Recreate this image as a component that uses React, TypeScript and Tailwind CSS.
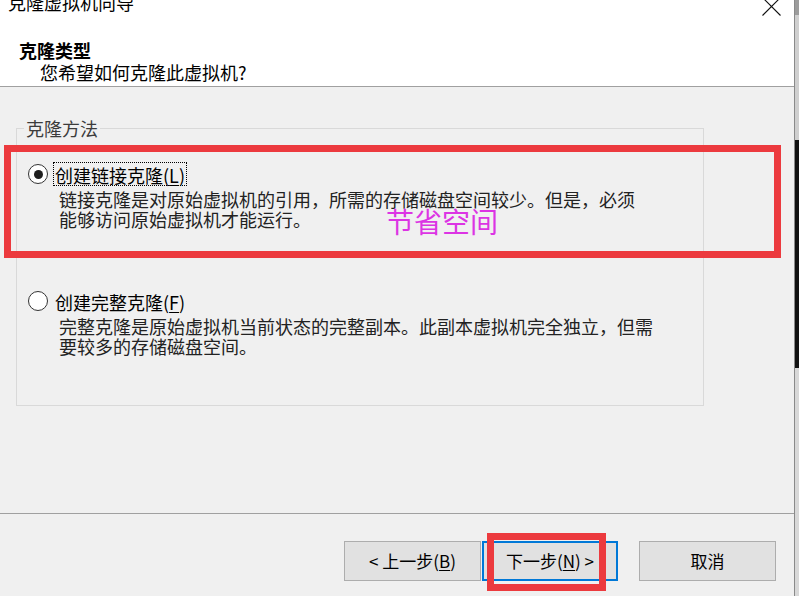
import React from "react";

function Radio({ checked }: { checked?: boolean }) {
  return (
    <span className="flex h-[20px] w-[20px] shrink-0 items-center justify-center rounded-full border-[1.5px] border-[#333] bg-white">
      {checked && <span className="h-[9px] w-[9px] rounded-full bg-[#1e1e1e]" />}
    </span>
  );
}

function Header() {
  return (
    <div className="relative flex h-[87px] shrink-0 flex-col border-b border-[#a0a0a0] bg-white">
      <div className="-mt-[7px] pl-[8px] text-[18px] leading-[18px]">克隆虚拟机向导</div>
      <div className="mt-[30px] pl-[19px] text-[18px] font-bold leading-[18px]">克隆类型</div>
      <div className="mt-[4px] pl-[40px] text-[18px] leading-[18px]">您希望如何克隆此虚拟机?</div>
      {/* close button glyph */}
      <svg className="absolute left-[762px] top-[-3px]" width="19" height="19" viewBox="0 0 19 19">
        <path d="M0.5 0.5 L18.5 18.5 M18.5 0.5 L0.5 18.5" stroke="#111" strokeWidth="1.1" fill="none" />
      </svg>
    </div>
  );
}

function Option({
  label,
  mnemonic,
  lines,
  checked,
  focused,
  top,
}: {
  label: string;
  mnemonic: string;
  lines: string[];
  checked?: boolean;
  focused?: boolean;
  top: string;
}) {
  return (
    <div className={top}>
      <div className="ml-[11px] flex items-center">
        <Radio checked={checked} />
        <span
          className={
            "ml-[5px] border border-dotted px-[1px] pt-[2px] text-[18px] leading-[20px] " +
            (focused ? "border-black" : "border-transparent")
          }
        >
          {label}(<span className="underline underline-offset-2">{mnemonic}</span>)
        </span>
      </div>
      <div className="ml-[42px] mt-[3px] text-[18px] leading-[20px] text-[#222]">
        {lines.map((l) => (
          <div key={l}>{l}</div>
        ))}
      </div>
    </div>
  );
}

function Body() {
  return (
    <div className="flex h-[426px] shrink-0 flex-col pl-[16px] pt-[32px]">
      <fieldset className="h-[287px] w-[688px] border border-[#d9d9d9]">
        <legend className="ml-[7px] px-[2px] text-[18px] leading-[18px] text-[#3c3c3c]">克隆方法</legend>
        <Option
          top="mt-[25px]"
          checked
          focused
          label="创建链接克隆"
          mnemonic="L"
          lines={[
            "链接克隆是对原始虚拟机的引用，所需的存储磁盘空间较少。但是，必须",
            "能够访问原始虚拟机才能运行。",
          ]}
        />
        <Option
          top="mt-[60px]"
          label="创建完整克隆"
          mnemonic="F"
          lines={[
            "完整克隆是原始虚拟机当前状态的完整副本。此副本虚拟机完全独立，但需",
            "要较多的存储磁盘空间。",
          ]}
        />
      </fieldset>
    </div>
  );
}

function Footer() {
  const btn =
    "flex h-[40px] items-center justify-center bg-[#e1e1e1] text-[17px] leading-[20px] text-black";
  return (
    <div className="flex h-[83px] shrink-0 border-t border-[#a0a0a0] pl-[344px] pt-[27px]">
      <button className={btn + " w-[137px] border border-[#adadad]"}>
        &lt; 上一步(<span className="underline underline-offset-2">B</span>)
      </button>
      <button className={btn + " ml-[1px] w-[136px] border-2 border-[#0078d7]"}>
        下一步(<span className="underline underline-offset-2">N</span>) &gt;
      </button>
      <button className={btn + " ml-[21px] w-[137px] border border-[#adadad]"}>取消</button>
    </div>
  );
}

export default function App() {
  return (
    <div className="flex h-[596px] w-[799px] overflow-hidden bg-[#f0f0f0] font-['Noto_Sans_CJK_SC',sans-serif] text-black">
      <div className="relative flex w-[795px] shrink-0 flex-col border-r border-[#8a8a8a]">
        <Header />
        <Body />
        <Footer />

        {/* annotations drawn on top of the dialog */}
        <div className="pointer-events-none absolute left-[4px] top-[145px] h-[113px] w-[777px] border-[7px] border-[#ec3a3e]" />
        <div className="pointer-events-none absolute left-[386px] top-[207px] text-[28px] leading-[28px] text-[#dc34e4]">
          节省空间
        </div>
        <div className="pointer-events-none absolute left-[487px] top-[533px] h-[58px] w-[119px] border-[7px] border-[#ec3a3e]" />
      </div>

      {/* sliver of the window behind */}
      <div className="flex w-[4px] flex-col">
        <div className="h-[15px] bg-[#9c9c9c]" />
        <div className="h-[125px] bg-[#cfcfcf]" />
        <div className="h-[228px] bg-[#111]" />
        <div className="flex-1 bg-[#d8d8d8]" />
      </div>
    </div>
  );
}
